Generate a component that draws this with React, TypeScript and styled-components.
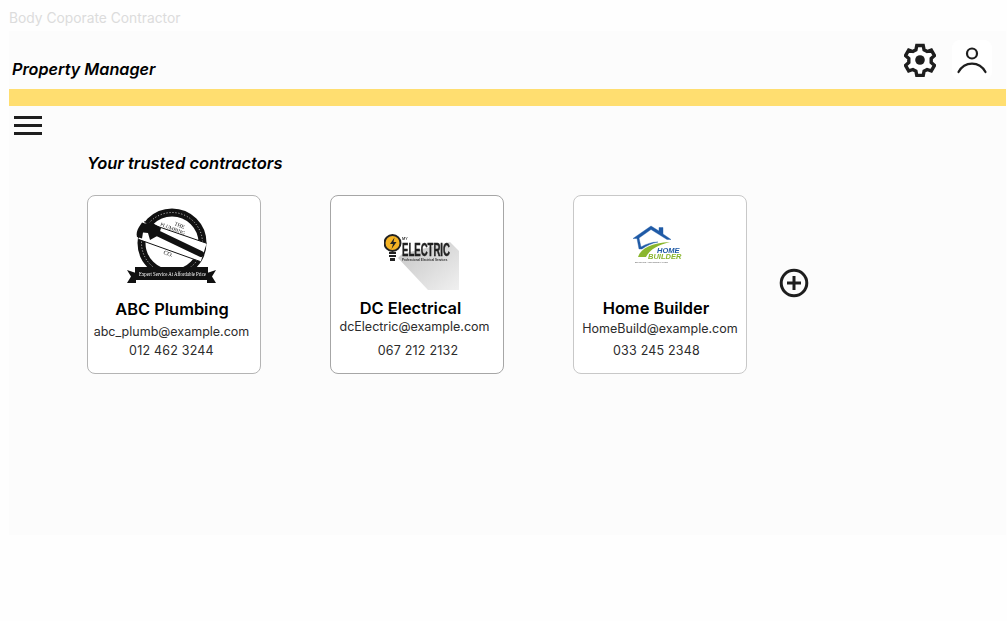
import React from "react";
import styled, { createGlobalStyle } from "styled-components";

const GlobalStyle = createGlobalStyle`
  html, body {
    margin: 0;
    padding: 0;
    background: #fefefe;
    font-family: Inter, "Liberation Sans", sans-serif;
  }
`;

const Page = styled.div`
  width: 1007px;
  height: 621px;
  overflow: hidden;
  padding-left: 9px;
  box-sizing: border-box;
`;

const PageLabel = styled.div`
  height: 31px;
  padding-top: 10px;
  box-sizing: border-box;
  font-size: 13.8px;
  line-height: 16px;
  color: #dcdcdc;
`;

const Frame = styled.div`
  width: 997px;
  height: 504px;
  background: #fcfcfc;
`;

const Header = styled.header`
  height: 58px;
  display: flex;
  align-items: flex-start;
  justify-content: space-between;
`;

const HeaderTitle = styled.h1`
  margin: 28px 0 0 3px;
  font-size: 16.2px;
  line-height: 20px;
  font-weight: 600;
  font-style: italic;
  color: #000;
`;

const HeaderActions = styled.div`
  display: flex;
  align-items: center;
  gap: 16px;
  margin: 9px 14px 0 0;
`;

const IconButton = styled.div`
  width: 40px;
  height: 40px;
  border-radius: 8px;
  background: #ffffff;
  display: flex;
  align-items: center;
  justify-content: center;
`;

const GearSlot = styled.div`
  width: 32px;
  height: 34px;
  display: flex;
  margin-top: -1px;
`;

const AccentBar = styled.div`
  height: 17px;
  background: #ffde70;
`;

const MenuButton = styled.div`
  width: 28px;
  margin: 10px 0 0 5px;
  display: flex;
  flex-direction: column;
  gap: 5px;
`;

const MenuLine = styled.span`
  display: block;
  height: 3px;
  background: #1e1e1e;
`;

const Content = styled.main`
  padding: 18px 0 0 78px;
`;

const SectionTitle = styled.h2`
  margin: 0 0 22px 0;
  font-size: 16.5px;
  line-height: 20px;
  font-weight: 600;
  font-style: italic;
  color: #000;
`;

const CardRow = styled.div`
  display: flex;
  align-items: center;
  gap: 69px;
`;

const Card = styled.article<{ $border: string }>`
  width: 174px;
  height: 179px;
  box-sizing: border-box;
  border: 1px solid ${(p) => p.$border};
  border-radius: 8px;
  background: #ffffff;
  display: flex;
  flex-direction: column;
  align-items: center;
`;

const LogoSlot = styled.div<{ $height: number; $top: number; $shift: number }>`
  height: ${(p) => p.$height}px;
  margin-top: ${(p) => p.$top}px;
  margin-left: ${(p) => p.$shift}px;
  display: flex;
  align-items: flex-start;
  flex-shrink: 0;
`;

const CardName = styled.div<{ $shift: number }>`
  font-size: 16.4px;
  line-height: 20px;
  font-weight: 600;
  color: #000;
  margin-left: ${(p) => p.$shift}px;
  white-space: nowrap;
`;

const CardLine = styled.div<{ $top: number; $shift: number }>`
  margin-top: ${(p) => p.$top}px;
  margin-left: ${(p) => p.$shift}px;
  font-size: 12.5px;
  line-height: 16px;
  color: #2c2c2c;
  white-space: nowrap;
`;

const CardPhone = styled(CardLine)`
  letter-spacing: 0.2px;
`;

const AddButton = styled.div`
  width: 30px;
  height: 30px;
  margin-left: -37px;
  margin-top: -3px;
  display: flex;
`;

const GearIcon = () => (
  <svg width="32" height="34" viewBox="0 0 32 34">
    <path
      d="M12.800 2.500h6.400l.9 4.300 3 1.700 4.200-1.400 3.200 5.500-3.300 3v3.800l3.300 3-3.200 5.500-4.200-1.400-3 1.700-.9 4.300h-6.400l-.9-4.300-3-1.700-4.200 1.400-3.200-5.500 3.300-3v-3.800l-3.300-3 3.200-5.500 4.200 1.400 3-1.700z"
      fill="#fff"
      stroke="#1e1e1e"
      strokeWidth="3.400"
      strokeLinejoin="miter"
    />
    <circle cx="16" cy="17" r="4.800" fill="#1e1e1e" />
  </svg>
);

const PersonIcon = () => (
  <svg width="32" height="32" viewBox="0 0 32 32" fill="none" stroke="#1e1e1e" strokeWidth="2.200" strokeLinecap="round">
    <circle cx="16" cy="9.500" r="5" />
    <path d="M2.500 28c3-5.500 8-8.400 13.500-8.400S26.500 22.500 29.500 28" />
  </svg>
);

const AddIcon = () => (
  <svg width="30" height="30" viewBox="0 0 30 30" fill="none" stroke="#1e1e1e" strokeWidth="3">
    <circle cx="15" cy="15" r="12.800" />
    <path d="M15 8v14M8 15h14" />
  </svg>
);

const PlumbingLogo = () => (
  <svg width="90" height="78" viewBox="0 0 90 78" style={{ filter: "blur(0.25px)" }}>
    <circle cx="45" cy="36" r="30.500" fill="#fff" stroke="#111" strokeWidth="8" />
    <circle cx="45" cy="36" r="30.500" fill="none" stroke="#fff" strokeWidth="0.8" strokeDasharray="1 2" />
    <polygon points="17,14.700 79.700,36.300 73.700,54.700 11.300,32.300" fill="#fff" />
    <path d="M17 14.700L79.700 36.300M11.300 32.300L73.700 54.700" stroke="#111" strokeWidth="1" />
    <text fontFamily="'Liberation Serif', serif" fontSize="5.500" fill="#111" transform="translate(47 18) rotate(22)">THE</text>
    <text fontFamily="'Liberation Serif', serif" fontSize="5" fill="#111" transform="translate(33 18.500) rotate(21)">
      PLUMBING
    </text>
    <text fontFamily="'Liberation Serif', serif" fontSize="6" fill="#111" transform="translate(36 47) rotate(20)">CO.</text>
    <path d="M28 25L74 47" stroke="#111" strokeWidth="6" strokeLinecap="round" />
    <path d="M12 20c-2 3-3 7-2 10l5 1.500 1-6 5 .5 2 7 9-5 2-7-10-6-6 1.500-3-1z" fill="#111" />
    <path d="M0 63l9 3v10l-9 0 4-6.500zM89 63l-9 3v10l9 0-4-6.500z" fill="#111" />
    <rect x="8" y="60" width="73" height="13" fill="#111" />
    <text fontFamily="'Liberation Serif', serif" fontSize="6" fill="#fff" transform="translate(12 68.800) scale(0.8 1)">
      Expert Service At Affordable Price
    </text>
  </svg>
);

const ElectricLogo = () => (
  <svg width="76" height="58" viewBox="0 0 76 58" style={{ filter: "blur(0.25px)" }}>
    <defs>
      <linearGradient id="electricShade" x1="0" y1="0" x2="1" y2="1">
        <stop offset="0" stopColor="#c4c4c4" />
        <stop offset="1" stopColor="#f0f0f0" />
      </linearGradient>
    </defs>
    <polygon points="14,24 44,56 75,56 75,17 66,8 18,20" fill="url(#electricShade)" />
    <circle cx="8.500" cy="9" r="8" fill="#f5b324" stroke="#222" strokeWidth="2" />
    <path d="M10.500 3.500L6 10h3l-1.500 5 5-7H9.500z" fill="#222" />
    <rect x="5" y="18" width="7" height="2" fill="#222" />
    <rect x="5" y="21" width="7" height="2" fill="#222" />
    <rect x="6" y="24" width="5" height="3" fill="#222" />
    <text x="18" y="5.500" fontFamily="Inter, sans-serif" fontSize="3.500" fontWeight="600" fill="#333">MY</text>
    <text
      fontFamily="'Liberation Sans', sans-serif"
      fontSize="19"
      fontWeight="700"
      fill="#222"
      stroke="#222"
      strokeWidth="0.5"
      transform="translate(18 22) scale(0.505 1)"
    >
      ELECTRIC
    </text>
    <text
      fontFamily="'Liberation Sans', sans-serif"
      fontSize="3"
      fontWeight="700"
      fill="#333"
      transform="translate(18 27) scale(1 1)"
    >
      Professional Electrical Services
    </text>
  </svg>
);

const HomeLogo = () => (
  <svg width="54" height="40" viewBox="0 0 54 40" style={{ filter: "blur(0.2px)" }}>
    <path d="M1 14.500L19 2l8 5V3.500h4v6.500l8 5.500h-4L19 5.500 7 14l2 9c5-3 11-5 17-5-6 1-12 4-16 7l-3 0-2-10.500z" fill="#1f5aa6" stroke="#1f5aa6" strokeWidth="0.4" />
    <path d="M6 33c3-9 14-14 32-15-12 3-20 7-24 15z" fill="#8ab62e" />
    <text
      x="25"
      y="28.500"
      fontFamily="'Liberation Sans', sans-serif"
      fontSize="7.500"
      fontWeight="700"
      fontStyle="italic"
      fill="#1f5aa6"
    >
      HOME
    </text>
    <text
      x="16"
      y="34.500"
      fontFamily="'Liberation Sans', sans-serif"
      fontSize="7.500"
      fontWeight="700"
      fontStyle="italic"
      fill="#8ab62e"
    >
      BUILDER
    </text>
    <text x="3" y="38.500" fontFamily="'Liberation Sans', sans-serif" fontSize="2.400" fill="#555">
      BUILDING AND RENOVATION
    </text>
  </svg>
);

export default function App() {
  return (
    <Page>
      <GlobalStyle />
      <PageLabel>Body Coporate Contractor</PageLabel>
      <Frame>
        <Header>
          <HeaderTitle>Property Manager</HeaderTitle>
          <HeaderActions>
            <GearSlot>
              <GearIcon />
            </GearSlot>
            <IconButton>
              <PersonIcon />
            </IconButton>
          </HeaderActions>
        </Header>
        <AccentBar />
        <MenuButton>
          <MenuLine />
          <MenuLine />
          <MenuLine />
        </MenuButton>
        <Content>
          <SectionTitle>Your trusted contractors</SectionTitle>
          <CardRow>
            <Card $border="#b4b4b4">
              <LogoSlot $height={92} $top={11} $shift={-4}>
                <PlumbingLogo />
              </LogoSlot>
              <CardName $shift={-4}>ABC Plumbing</CardName>
              <CardLine $top={5} $shift={-5}>abc_plumb@example.com</CardLine>
              <CardPhone $top={3} $shift={-5}>012 462 3244</CardPhone>
            </Card>
            <Card $border="#a6a6a6">
              <LogoSlot $height={64} $top={38} $shift={9}>
                <ElectricLogo />
              </LogoSlot>
              <CardName $shift={-13}>DC Electrical</CardName>
              <CardLine $top={1} $shift={-5}>dcElectric@example.com</CardLine>
              <CardPhone $top={8} $shift={2}>067 212 2132</CardPhone>
            </Card>
            <Card $border="#c8c8c8">
              <LogoSlot $height={74} $top={28} $shift={-2}>
                <HomeLogo />
              </LogoSlot>
              <CardName $shift={-8}>Home Builder</CardName>
              <CardLine $top={3} $shift={0}>HomeBuild@example.com</CardLine>
              <CardPhone $top={6} $shift={-7}>033 245 2348</CardPhone>
            </Card>
            <AddButton>
              <AddIcon />
            </AddButton>
          </CardRow>
        </Content>
      </Frame>
    </Page>
  );
}
